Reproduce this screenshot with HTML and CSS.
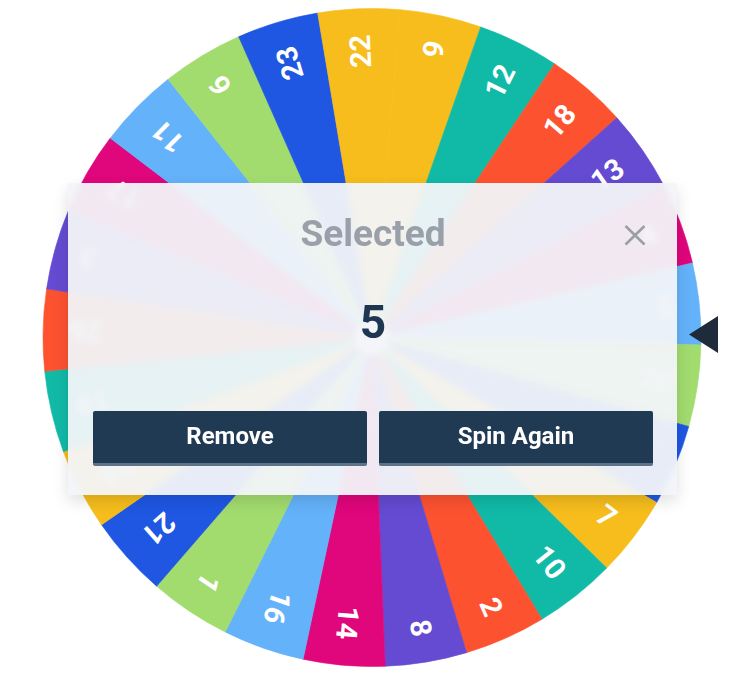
FILE: index.html
```html
<!DOCTYPE html>
<html lang="en">
<head>
<meta charset="utf-8">
<title>Wheel</title>
<link rel="stylesheet" href="styles.css">
</head>
<body>
<div class="stage">
  <svg class="wheel" width="756" height="678" viewBox="0 0 756 678" xmlns="http://www.w3.org/2000/svg">
    <defs>
      <path id="wedge" d="M0 0 L326.41 -41.24 A329 329 0 0 1 326.41 41.24 Z"/>
    </defs>
    <g transform="translate(372 337.5)">
      <g transform="rotate(-77.9)"><use href="#wedge" class="c0"/><text x="303" class="lbl">9</text></g>
      <g transform="rotate(-63.5)"><use href="#wedge" class="c1"/><text x="303" class="lbl">12</text></g>
      <g transform="rotate(-49.1)"><use href="#wedge" class="c2"/><text x="303" class="lbl">18</text></g>
      <g transform="rotate(-34.7)"><use href="#wedge" class="c3"/><text x="303" class="lbl">13</text></g>
      <g transform="rotate(-20.3)"><use href="#wedge" class="c4"/><text x="303" class="lbl">4</text></g>
      <g transform="rotate(-5.9)"><use href="#wedge" class="c5"/><text x="303" class="lbl">5</text></g>
      <g transform="rotate(8.5)"><use href="#wedge" class="c6"/><text x="303" class="lbl">20</text></g>
      <g transform="rotate(22.9)"><use href="#wedge" class="c7"/><text x="303" class="lbl">15</text></g>
      <g transform="rotate(37.3)"><use href="#wedge" class="c0"/><text x="303" class="lbl">7</text></g>
      <g transform="rotate(51.7)"><use href="#wedge" class="c1"/><text x="303" class="lbl">10</text></g>
      <g transform="rotate(66.1)"><use href="#wedge" class="c2"/><text x="303" class="lbl">2</text></g>
      <g transform="rotate(80.5)"><use href="#wedge" class="c3"/><text x="303" class="lbl">8</text></g>
      <g transform="rotate(94.9)"><use href="#wedge" class="c4"/><text x="303" class="lbl">14</text></g>
      <g transform="rotate(109.3)"><use href="#wedge" class="c5"/><text x="303" class="lbl">16</text></g>
      <g transform="rotate(123.7)"><use href="#wedge" class="c6"/><text x="303" class="lbl">1</text></g>
      <g transform="rotate(138.1)"><use href="#wedge" class="c7"/><text x="303" class="lbl">21</text></g>
      <g transform="rotate(152.5)"><use href="#wedge" class="c0"/><text x="303" class="lbl">24</text></g>
      <g transform="rotate(166.9)"><use href="#wedge" class="c1"/><text x="303" class="lbl">19</text></g>
      <g transform="rotate(181.3)"><use href="#wedge" class="c2"/><text x="303" class="lbl">26</text></g>
      <g transform="rotate(195.7)"><use href="#wedge" class="c3"/><text x="303" class="lbl">3</text></g>
      <g transform="rotate(210.1)"><use href="#wedge" class="c4"/><text x="303" class="lbl">17</text></g>
      <g transform="rotate(224.5)"><use href="#wedge" class="c5"/><text x="303" class="lbl">11</text></g>
      <g transform="rotate(238.9)"><use href="#wedge" class="c6"/><text x="303" class="lbl">6</text></g>
      <g transform="rotate(253.3)"><use href="#wedge" class="c7"/><text x="303" class="lbl">23</text></g>
      <g transform="rotate(267.7)"><use href="#wedge" class="c0"/><text x="303" class="lbl">22</text></g>
      <circle cx="0" cy="0" r="18" class="hub"/>
    </g>
    <polygon points="689,334.5 718,316 718,353" class="pointer"/>
  </svg>

  <div class="dialog">
    <div class="dialog-head">
      <h2 class="dialog-title">Selected</h2>
      <button class="close" aria-label="Close">
        <svg width="22" height="22" viewBox="0 0 22 22" xmlns="http://www.w3.org/2000/svg">
          <path d="M1.5 2 L20.5 20.5 M20.5 2 L1.5 20.5" class="close-x"/>
        </svg>
      </button>
    </div>
    <div class="result">5</div>
    <div class="actions">
      <button class="btn">Remove</button>
      <button class="btn">Spin Again</button>
    </div>
  </div>
</div>
</body>
</html>
```

FILE: styles.css
```css
html, body {
  margin: 0;
  padding: 0;
  background: #ffffff;
}

body {
  font-family: Roboto, "Liberation Sans", Arial, sans-serif;
}

.stage {
  position: relative;
  width: 756px;
  height: 678px;
  overflow: hidden;
}

.wheel {
  display: block;
}

.c0 { fill: #f6bd1c; stroke: #f6bd1c; }
.c1 { fill: #11baa7; stroke: #11baa7; }
.c2 { fill: #fd5230; stroke: #fd5230; }
.c3 { fill: #644bd2; stroke: #644bd2; }
.c4 { fill: #e0067c; stroke: #e0067c; }
.c5 { fill: #64b2fa; stroke: #64b2fa; }
.c6 { fill: #a2dc6f; stroke: #a2dc6f; }
.c7 { fill: #1f57e3; stroke: #1f57e3; }

use { stroke-width: 0.6; }

.lbl {
  fill: #ffffff;
  font-family: Roboto, "Liberation Sans", Arial, sans-serif;
  font-weight: 700;
  font-size: 29px;
  text-anchor: end;
  dominant-baseline: central;
}

.hub { fill: #ffffff; }

.pointer { fill: #1e2b3a; }

.dialog {
  position: absolute;
  left: 68px;
  top: 183px;
  width: 609px;
  height: 312px;
  box-sizing: border-box;
  padding: 29px 24px 29px 25px;
  background: rgba(242, 244, 248, 0.95);
  backdrop-filter: blur(3px);
  border-radius: 2px;
  box-shadow: 0 6px 16px rgba(0, 0, 0, 0.13);
  display: flex;
  flex-direction: column;
}

.dialog-head {
  position: relative;
  height: 42px;
}

.dialog-title {
  margin: 0;
  font-size: 37px;
  line-height: 42px;
  font-weight: 700;
  color: #9aa0a9;
  text-align: center;
  padding-top: 1px;
}

.close {
  position: absolute;
  right: 7px;
  top: 12px;
  width: 22px;
  height: 22px;
  padding: 0;
  border: 0;
  background: none;
  cursor: pointer;
}

.close svg { display: block; }

.close-x {
  stroke: #9b9fa4;
  stroke-width: 2.6;
  fill: none;
}

.result {
  margin-top: 40px;
  font-size: 46px;
  line-height: 56px;
  font-weight: 700;
  color: #1f3650;
  text-align: center;
}

.actions {
  margin-top: 61px;
  display: grid;
  grid-template-columns: 1fr 1fr;
  gap: 12px;
}

.btn {
  height: 55px;
  box-sizing: border-box;
  border: 0;
  border-bottom: 3px solid #5e7388;
  border-radius: 2px;
  background: #213a53;
  color: #ffffff;
  font-family: Roboto, "Liberation Sans", Arial, sans-serif;
  font-weight: 700;
  font-size: 24px;
  padding: 0 0 2px;
  cursor: pointer;
}
```
